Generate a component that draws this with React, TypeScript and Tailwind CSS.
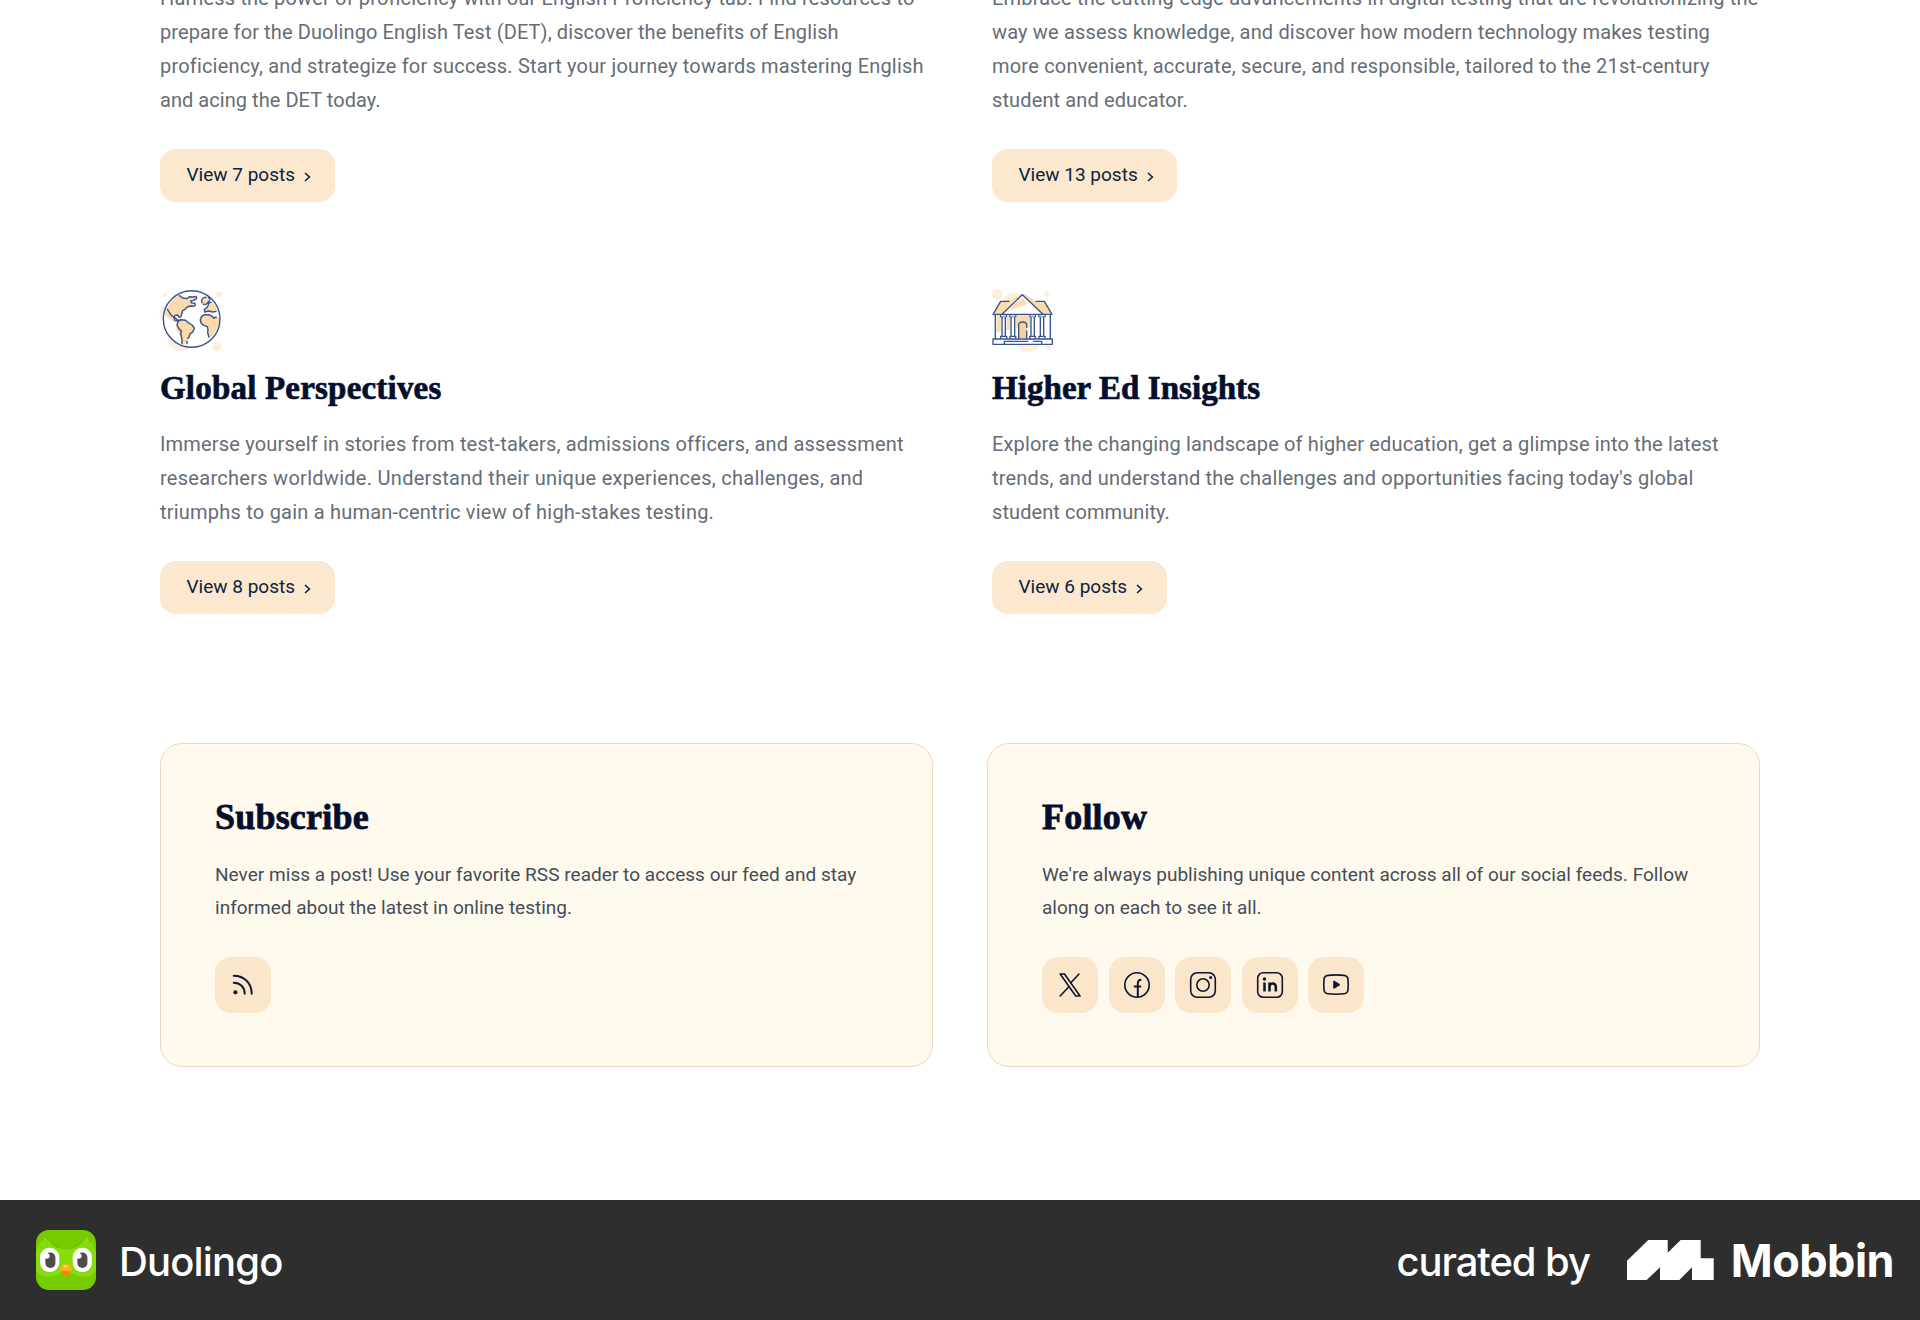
import type { ReactNode } from "react";

type TextLine = { text: string; tracking: string };

function Lines({ lines }: { lines: TextLine[] }) {
  return (
    <>
      {lines.map((line) => (
        <span key={line.text} className={`block whitespace-nowrap ${line.tracking}`}>
          {line.text}
        </span>
      ))}
    </>
  );
}

function ViewButton({ label }: { label: string }) {
  return (
    <a className="mt-8 flex h-[53px] w-fit items-center gap-[9px] rounded-2xl bg-[#fbe8cf] pr-[23.5px] pl-[26.5px] text-[19px] text-[#0b2341]">
      <span>{label}</span>
      <svg className="mt-[2px] h-[10px] w-[7px]" viewBox="0 0 7 10" fill="none" stroke="currentColor" strokeWidth="1.6">
        <path d="M1 1l4.4 4L1 9" />
      </svg>
    </a>
  );
}

function Description({ lines }: { lines: TextLine[] }) {
  return (
    <p className="text-[20px] leading-[34px] text-[#656d76]">
      <Lines lines={lines} />
    </p>
  );
}

function GlobeIcon() {
  return (
    <svg className="h-16 w-[62px] overflow-visible" viewBox="30 24 186 192" fill="none">
      <g fill="#fdeedd">
        <circle cx="45" cy="44" r="6" />
        <circle cx="207" cy="44" r="9" />
        <circle cx="200" cy="199" r="14" />
        <circle cx="92" cy="176" r="39" />
        <circle cx="52" cy="102" r="24" />
      </g>
      <circle cx="125" cy="117" r="85" fill="#fff" />
      <g fill="#fbd9ab">
        <path d="M52 88C58 68 72 52 88 46l10 5 13 5 14-4 13-2 2 7-9 6-8 4 5 6 7 2-6 6-12-3-10 6-9 8-5 8-2 8-6 1-4-7-9 0-4 8 3 9 7 3-3 6-11-7-9-8-11-10z" />
        <path d="M83 126l8-6 13 1 10 8 14 7 6 9-4 12-9 7-3 11-8 9-6 8-8 3-5-6 2-14-5-13-8-9-2-12z" />
        <path d="M154 106l12-6 14 4 8 9 11 0 10-2c1 22-8 44-30 62l-5-12-4-11 2-11-10-3-11-7-3-11z" />
        <path d="M156 56l15-6 6 4-5 12-10 6-6-6zM163 87l10-4 4-12 8-3 11 11 5 15-10 1-14-4-11 4z" />
      </g>
      <g stroke="#3a568c" strokeWidth="4.3" strokeLinecap="round" strokeLinejoin="round">
        <circle cx="125" cy="117" r="85" />
        <path d="M88 47l10 7 12 2 9-6 11 1 8-2 2 7-10 5-8 2 3 6 9 1 2 5-5 4-10-1-9 3-7 7-7 4-3 9-2 9-5 2-5-7-8 1-4 6 4 9 8 2M52 88l4 6 8 12 11 7 8 7 6 1" />
        <path d="M96 190l0-14-4-13 2-10-7-7-6-11 3-10 8-6 15 2 8 7 11 7 7 9-4 11-9 7-3 9-4 4M111 184l0 7" />
        <path d="M177 171l-4-13 1-9-2-9-9-3-9-6-3-11 4-11 9-5 13 0 9 5 7 6M195 112h4M156 68c-4-7 1-16 12-16M176 53c9 8-2 13-5 17s-8 5-11 2M198 94l-10 2-12-3-12 3-1-8 8-5 4-8 1-6 7-2" />
      </g>
    </svg>
  );
}

function UniversityIcon() {
  return (
    <svg className="h-16 w-[62px] overflow-visible" viewBox="36 24 186 192" fill="none">
      <g fill="#fdeedd">
        <circle cx="52" cy="43" r="16" />
        <circle cx="200" cy="41" r="8" />
        <circle cx="145" cy="179" r="37" />
        <circle cx="104" cy="76" r="38" />
        <circle cx="204" cy="201" r="10" />
      </g>
      <path d="M46 103h164v73H46z" fill="#fff" />
      <path d="M50 103h112v20l-14 22h-36l-32 6-30 5z" fill="#fbdcae" />
      <path d="M42 99l20-35h26l32-21h16l30 21h26l22 35-6 5H46z" fill="#fbdcae" />
      <path d="M66 103l61-60 62 60z" fill="#fff" />
      <path d="M100 74l28-19 16 17-54 19z" fill="#fbdcae" />
      <path d="M62 105h18v65H62zM90 105h17v65H90zM150 105h16v65h-16zM178 105h16v65h-16z" fill="#fff" />
      <path d="M117 174v-40c0-12 23-12 23 0v40z" fill="#f9d2a0" />
      <path d="M39 176h178v17H39z" fill="#fff" />
      <g stroke="#3a568c" strokeWidth="4.1" strokeLinecap="round" strokeLinejoin="round">
        <path d="M39 103l23-39h25M216 103l-23-39h-25M46 103h164M39 103h27l61-59 62 59h27M46 104v71M211 104v71" />
        <path d="M39 177h178v16H39zM73 192v-8h70M161 184h24v8" />
        <path d="M62 106v4h17v-4M66 111v55M76 111v55M62 175v-6h18v6M90 106v4h17v-4M93 111v55M104 111v55M90 175v-6h17v6M150 106v4h16v-4M153 111v55M163 111v55M149 175v-6h17v6M177 106v4h18v-4M181 111v55M191 111v55M177 175v-6h18v6" />
        <path d="M116 175v-40c0-12 24-12 24 0v7M140 153v22" />
      </g>
      <g fill="#a9d5f2">
        <path d="M64 106h14v4H64zM92 106h14v4H92zM151 106h14v4h-14zM179 106h14v4h-14z" />
      </g>
    </svg>
  );
}

function Topic({ icon, title, titleTracking, lines, button }: { icon: ReactNode; title: string; titleTracking: string; lines: TextLine[]; button: string }) {
  return (
    <article>
      {icon}
      <h2 className={`mt-4 mb-[19px] font-['Liberation_Serif',serif] text-[33px] leading-10 font-bold text-[#040f2d] [-webkit-text-stroke:0.7px_#040f2d] ${titleTracking}`}>
        {title}
      </h2>
      <Description lines={lines} />
      <ViewButton label={button} />
    </article>
  );
}

function Card({ title, lines, children }: { title: string; lines: TextLine[]; children: ReactNode }) {
  return (
    <section className="h-[324px] rounded-[22px] border border-[#ecd8bf] bg-[#fffaed] px-[54px] pt-[51px]">
      <h2 className="mb-[19px] font-['Liberation_Serif',serif] text-[36px] leading-[44px] font-bold tracking-[0.2px] text-[#040f2d] [-webkit-text-stroke:0.8px_#040f2d]">{title}</h2>
      <p className="text-[19px] leading-[33px] text-[#434d5a]">
        <Lines lines={lines} />
      </p>
      <div className="mt-[33px] flex gap-[10.6px]">{children}</div>
    </section>
  );
}

function IconTile({ children }: { children: ReactNode }) {
  return (
    <a className="flex size-14 items-center justify-center rounded-2xl bg-[#fbe6cb] text-[#0a1830]">
      <svg className="size-7" viewBox="0 0 28 28" fill="none" stroke="currentColor" strokeWidth="1.6" strokeLinecap="round" strokeLinejoin="round">
        {children}
      </svg>
    </a>
  );
}

function OwlLogo() {
  return (
    <svg className="size-[60px] rounded-[13px]" viewBox="0 0 60 60">
      <path d="M0 0h60v60H0z" fill="#76cc00" />
      <path d="M0 22L4 12l2 1 3-6 4 4c5 6 9 8 17 8s12-2 17-8l4-4 3 6 2-1 4 10v18c-4 8-17 9-24 3H24C17 49 4 48 0 40z" fill="#86dc0c" />
      <path d="M9 7l4 4c5 6 10 8 17 8s12-2 17-8l4-4-8 6-13 7-13-7z" fill="#6cc000" />
      <rect x="4" y="17.7" width="19.3" height="24.4" rx="9.4" fill="#fff" />
      <rect x="36.7" y="17.7" width="19.3" height="24.4" rx="9.4" fill="#fff" />
      <rect x="9.4" y="22.6" width="10" height="15.4" rx="5" fill="#4b4b4b" />
      <rect x="41.4" y="22.6" width="10" height="15.4" rx="5" fill="#4b4b4b" />
      <circle cx="10.8" cy="26" r="2.8" fill="#fff" />
      <circle cx="42.8" cy="26" r="2.8" fill="#fff" />
      <path d="M25.5 39h9l-1 5c-.6 2.6-6.4 2.6-7 0z" fill="#ff8000" />
      <path d="M23.3 38.5c1.5-2.5 4-4.5 6.6-4.5s5.1 2 6.6 4.5c-1.5 2.3-3.5 2.6-6.6 2.6s-5.1-.3-6.6-2.6z" fill="#ffb020" />
      <ellipse cx="29.7" cy="36.3" rx="2.7" ry="1.5" fill="#ffd24d" />
    </svg>
  );
}

export default function App() {
  return (
    <div className="flex h-[1320px] w-[1920px] flex-col overflow-hidden bg-white font-['Roboto',sans-serif]">
      <main className="h-[1200px] shrink-0 overflow-hidden px-40">
        <div className="grid grid-cols-2 gap-x-16">
          <article className="-mt-[19px]">
            <Description
              lines={[
                { text: "Harness the power of proficiency with our English Proficiency tab. Find resources to", tracking: "tracking-[0.15px]" },
                { text: "prepare for the Duolingo English Test (DET), discover the benefits of English", tracking: "tracking-[0.11px]" },
                { text: "proficiency, and strategize for success. Start your journey towards mastering English", tracking: "tracking-[0.18px]" },
                { text: "and acing the DET today.", tracking: "tracking-[0.05px]" },
              ]}
            />
            <ViewButton label="View 7 posts" />
          </article>
          <article className="-mt-[19px]">
            <Description
              lines={[
                { text: "Embrace the cutting-edge advancements in digital testing that are revolutionizing the", tracking: "tracking-[0.19px]" },
                { text: "way we assess knowledge, and discover how modern technology makes testing", tracking: "tracking-[0.16px]" },
                { text: "more convenient, accurate, secure, and responsible, tailored to the 21st-century", tracking: "tracking-[0.21px]" },
                { text: "student and educator.", tracking: "tracking-[0.12px]" },
              ]}
            />
            <ViewButton label="View 13 posts" />
          </article>
        </div>

        <div className="mt-[86px] grid grid-cols-2 gap-x-16">
          <Topic
            icon={<GlobeIcon />}
            title="Global Perspectives"
            titleTracking="tracking-[0.2px]"
            lines={[
              { text: "Immerse yourself in stories from test-takers, admissions officers, and assessment", tracking: "tracking-[0.18px]" },
              { text: "researchers worldwide. Understand their unique experiences, challenges, and", tracking: "tracking-[0.28px]" },
              { text: "triumphs to gain a human-centric view of high-stakes testing.", tracking: "tracking-[0.22px]" },
            ]}
            button="View 8 posts"
          />
          <Topic
            icon={<UniversityIcon />}
            title="Higher Ed Insights"
            titleTracking="tracking-[0.05px]"
            lines={[
              { text: "Explore the changing landscape of higher education, get a glimpse into the latest", tracking: "tracking-[0.15px]" },
              { text: "trends, and understand the challenges and opportunities facing today's global", tracking: "tracking-[0.19px]" },
              { text: "student community.", tracking: "tracking-[0.08px]" },
            ]}
            button="View 6 posts"
          />
        </div>

        <div className="mt-[129px] grid grid-cols-2 gap-x-[54px]">
          <Card
            title="Subscribe"
            lines={[
              { text: "Never miss a post! Use your favorite RSS reader to access our feed and stay", tracking: "tracking-[0.04px]" },
              { text: "informed about the latest in online testing.", tracking: "tracking-[0.01px]" },
            ]}
          >
            <IconTile>
              <path d="M4.7 4.7c10.5 0 18 7.5 18 18M4.7 11.7c6.5 0 11 4.5 11 11" strokeWidth="1.9" />
              <circle cx="6.4" cy="21.3" r="2.1" fill="currentColor" stroke="none" />
            </IconTile>
          </Card>
          <Card
            title="Follow"
            lines={[
              { text: "We're always publishing unique content across all of our social feeds. Follow", tracking: "tracking-[0.03px]" },
              { text: "along on each to see it all.", tracking: "tracking-[0px]" },
            ]}
          >
            <IconTile>
              <path d="M4.2 3h4.3L24 25h-4.3zM4.2 25l8.6-9.2M23 3l-7.9 8.5" />
            </IconTile>
            <IconTile>
              <circle cx="14" cy="14" r="12.2" />
              <path d="M14.8 26V12.5c0-2.5 1.2-3.8 3.500-3.800M10.8 15.6h7.4" strokeWidth="2" strokeLinecap="butt" />
            </IconTile>
            <IconTile>
              <rect x="1.7" y="1.7" width="24.6" height="24.6" rx="6.5" />
              <circle cx="14" cy="14" r="6.2" />
              <circle cx="21.6" cy="6.6" r="1.5" fill="currentColor" stroke="none" />
            </IconTile>
            <IconTile>
              <rect x="1.7" y="1.7" width="24.6" height="24.6" rx="5.5" />
              <path d="M8.5 11.5v9M13.5 11.5v9M13.5 16c0-4.3 6.3-4.8 6.3-.3v4.8" strokeWidth="2.5" strokeLinecap="butt" />
              <circle cx="8.5" cy="8" r="1.7" fill="currentColor" stroke="none" />
            </IconTile>
            <IconTile>
              <path d="M6 4.4c5-.6 11-.6 16 0 2.6.3 3.8 1.6 4 4 .3 3.500.3 6.900 0 10.400-.2 2.400-1.400 3.700-4 4-5 .6-11 .6-16 0-2.600-.3-3.800-1.600-4-4-.3-3.500-.3-6.900 0-10.400.2-2.400 1.400-3.700 4-4z" />
              <path d="M12 10.500v6.400l5.200-3.200z" fill="currentColor" />
            </IconTile>
          </Card>
        </div>
      </main>

      <footer className="flex h-[120px] shrink-0 items-center justify-between bg-[#2e2e2e] pr-[26px] pl-9 font-['Inter',sans-serif] text-white">
        <div className="flex items-center gap-[23px]">
          <OwlLogo />
          <span className="mt-1 text-[40px] leading-[60px] font-medium tracking-[-0.85px]">Duolingo</span>
        </div>
        <div className="flex items-center">
          <span className="mt-1 text-[40px] leading-[60px] font-medium tracking-[-1.1px]">curated by</span>
          <svg className="mr-[17px] ml-[37px] h-10 w-[87px]" viewBox="0 0 87 40" fill="#fff">
            <path d="M0 20.7L21.3 0h19.4v12.7L53.7 0h20v18.3h13V40H65V27.3L52.3 40H33V27.3L19.7 40H0z" />
          </svg>
          <span className="mt-px text-[45px] leading-[60px] font-bold tracking-[-0.55px]">Mobbin</span>
        </div>
      </footer>
    </div>
  );
}
